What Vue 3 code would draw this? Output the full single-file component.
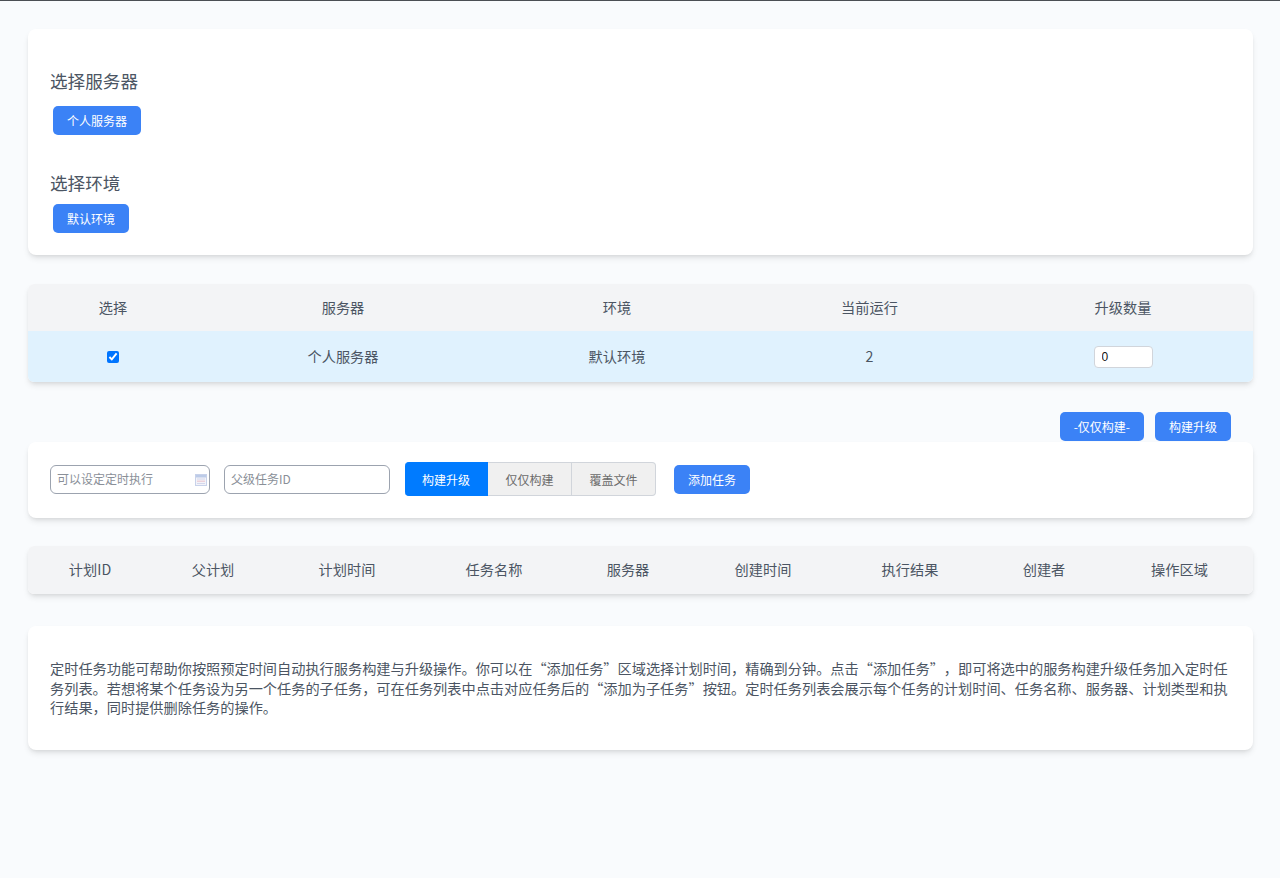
<script setup>
const head1 = ['选择', '服务器', '环境', '当前运行', '升级数量']
const head2 = ['计划ID', '父计划', '计划时间', '任务名称', '服务器', '创建时间', '执行结果', '创建者', '操作区域']
</script>

<template>
  <main class="page">
    <section class="card select-card">
      <h3 class="title">选择服务器</h3>
      <div class="btn-row"><button class="btn">个人服务器</button></div>
      <h3 class="title second">选择环境</h3>
      <div class="btn-row env"><button class="btn">默认环境</button></div>
    </section>

    <section class="table-wrap first-table">
      <table class="tbl one">
        <thead>
          <tr><th v-for="h in head1" :key="h">{{ h }}</th></tr>
        </thead>
        <tbody>
          <tr class="sel">
            <td><input class="check" type="checkbox" checked /></td>
            <td>个人服务器</td>
            <td>默认环境</td>
            <td>2</td>
            <td><input class="num" type="text" value="0" /></td>
          </tr>
        </tbody>
      </table>
    </section>

    <div class="actions">
      <button class="btn">-仅仅构建-</button>
      <button class="btn">构建升级</button>
    </div>

    <section class="card task-card">
      <div class="date-field">
        <input class="field date" type="text" placeholder="可以设定定时执行" />
        <svg class="cal" viewBox="0 0 12 12" width="12" height="12" aria-hidden="true">
          <rect x="0.5" y="0.5" width="11" height="11" fill="#f3f3f9" stroke="#c8d2ea" />
          <rect x="1" y="1" width="10" height="2.5" fill="#bccbe8" />
          <path d="M2 5h8M2 9.5h8" stroke="#d4d8ec" stroke-width="1" />
          <path d="M2 7.2h8" stroke="#eac9d2" stroke-width="1.2" />
        </svg>
      </div>
      <input class="field parent" type="text" placeholder="父级任务ID" />
      <div class="seg">
        <span class="seg-item on">构建升级</span>
        <span class="seg-item">仅仅构建</span>
        <span class="seg-item">覆盖文件</span>
      </div>
      <button class="btn add">添加任务</button>
    </section>

    <section class="table-wrap second-table">
      <table class="tbl two">
        <thead>
          <tr><th v-for="h in head2" :key="h">{{ h }}</th></tr>
        </thead>
      </table>
    </section>

    <section class="card note">
      <p>定时任务功能可帮助你按照预定时间自动执行服务构建与升级操作。你可以在“添加任务”区域选择计划时间，精确到分钟。点击“添加任务”，即可将选中的服务构建升级任务加入定时任务列表。若想将某个任务设为另一个任务的子任务，可在任务列表中点击对应任务后的“添加为子任务”按钮。定时任务列表会展示每个任务的计划时间、任务名称、服务器、计划类型和执行结果，同时提供删除任务的操作。</p>
    </section>
  </main>
</template>

<style>
html, body { margin: 0; background: #f9fafb; }
</style>

<style scoped>
.page {
  box-sizing: border-box;
  min-height: 878px;
  padding: 28px 27px 0 28px;
  border-top: 1px solid #4b4f54;
  background: #f9fbfd;
  font-family: "Noto Sans CJK SC", "Noto Sans", sans-serif;
  color: #4b5563;
  text-spacing-trim: space-all;
}
.card {
  background: #fff;
  border-radius: 8px;
  box-shadow: 0 4px 6px -1px rgba(0, 0, 0, 0.1), 0 2px 4px -2px rgba(0, 0, 0, 0.1);
}
.select-card {
  box-sizing: border-box;
  height: 226px;
  padding: 40px 22px 0;
}
.title {
  margin: 0;
  font-size: 17.6px;
  line-height: 24px;
  font-weight: 400;
  color: #4b5563;
}
.title.second { margin-top: 36px; }
.btn-row { margin: 13px 0 0 3px; font-size: 0; }
.btn-row.env { margin-top: 9px; }
.btn {
  height: 29px;
  padding: 0 14px;
  border: 0;
  border-radius: 5px;
  background: #3b82f6;
  color: #fff;
  font: 12px/29px "Noto Sans CJK SC", "Noto Sans", sans-serif;
}
.table-wrap {
  background: #fff;
  border-radius: 6px;
  overflow: hidden;
  box-shadow: 0 4px 6px -1px rgba(0, 0, 0, 0.1), 0 2px 4px -2px rgba(0, 0, 0, 0.1);
}
.first-table { margin-top: 29px; }
.tbl {
  width: 100%;
  table-layout: fixed;
  border-collapse: collapse;
  font-size: 14.2px;
  color: #4b5563;
  text-align: center;
}
.tbl th {
  box-sizing: border-box;
  height: 47px;
  padding: 0 0 2px;
  background: #f3f4f6;
  font-weight: 400;
}
.two th {
  height: 48px;
  padding-bottom: 3px;
}
.tbl td {
  box-sizing: border-box;
  height: 51px;
  padding: 0 0 2px;
  background: #e0f2fe;
}
.one th:nth-child(1) { width: 170px; }
.one th:nth-child(2) { width: 290px; }
.one th:nth-child(3) { width: 258px; }
.one th:nth-child(4) { width: 247px; }
.two th:nth-child(1) { width: 124px; }
.two th:nth-child(2) { width: 122px; }
.two th:nth-child(3) { width: 146px; }
.two th:nth-child(4) { width: 148px; }
.two th:nth-child(5) { width: 120px; }
.two th:nth-child(6) { width: 150px; }
.two th:nth-child(7) { width: 144px; }
.two th:nth-child(8) { width: 124px; }
.check {
  width: 12px;
  height: 12px;
  margin: 0 0 2px;
  vertical-align: middle;
  accent-color: #0075ff;
}
.num {
  box-sizing: border-box;
  width: 59px;
  height: 22px;
  margin-top: 2px;
  padding: 0 7px;
  border: 1px solid #d1d5db;
  border-radius: 4px;
  background: #fff;
  font: 12px "Liberation Sans", sans-serif;
  color: #111;
  vertical-align: middle;
}
.actions {
  display: flex;
  justify-content: flex-end;
  gap: 11px;
  margin-top: 30px;
  padding-right: 22px;
  height: 30px;
}
.task-card {
  box-sizing: border-box;
  height: 76px;
  display: flex;
  align-items: center;
  padding: 0 22px 2px;
}
.date-field {
  position: relative;
  display: flex;
}
.field {
  box-sizing: border-box;
  height: 29px;
  padding: 0 6px 2px;
  border: 1px solid #9ca3af;
  border-radius: 6px;
  background: #fff;
  font: 12px "Noto Sans CJK SC", sans-serif;
  color: #4b5563;
  outline: none;
}
.field::placeholder { color: #8a8f98; }
.date { width: 160px; }
.cal {
  position: absolute;
  right: 3px;
  top: 9px;
}
.parent { width: 166px; margin-left: 14px; }
.seg {
  display: flex;
  margin-left: 15px;
  height: 34px;
  font-size: 12px;
  color: #6b6b6b;
}
.seg-item {
  box-sizing: border-box;
  width: 84px;
  line-height: 33px;
  text-align: center;
  background: #f0f0f0;
  border: 1px solid #d1d5db;
  border-left: 0;
}
.seg-item:last-child { border-radius: 0 4px 4px 0; }
.seg-item.on {
  width: 83px;
  background: #007bff;
  border-color: #007bff;
  border-radius: 4px 0 0 4px;
  color: #fff;
}
.add { margin-left: 18px; }
.second-table { margin-top: 28px; }
.note {
  box-sizing: border-box;
  height: 124px;
  margin-top: 32px;
  padding: 33px 22px 0;
}
.note p {
  margin: 0;
  font-size: 14.2px;
  line-height: 19.5px;
  color: #4b5563;
}
</style>
